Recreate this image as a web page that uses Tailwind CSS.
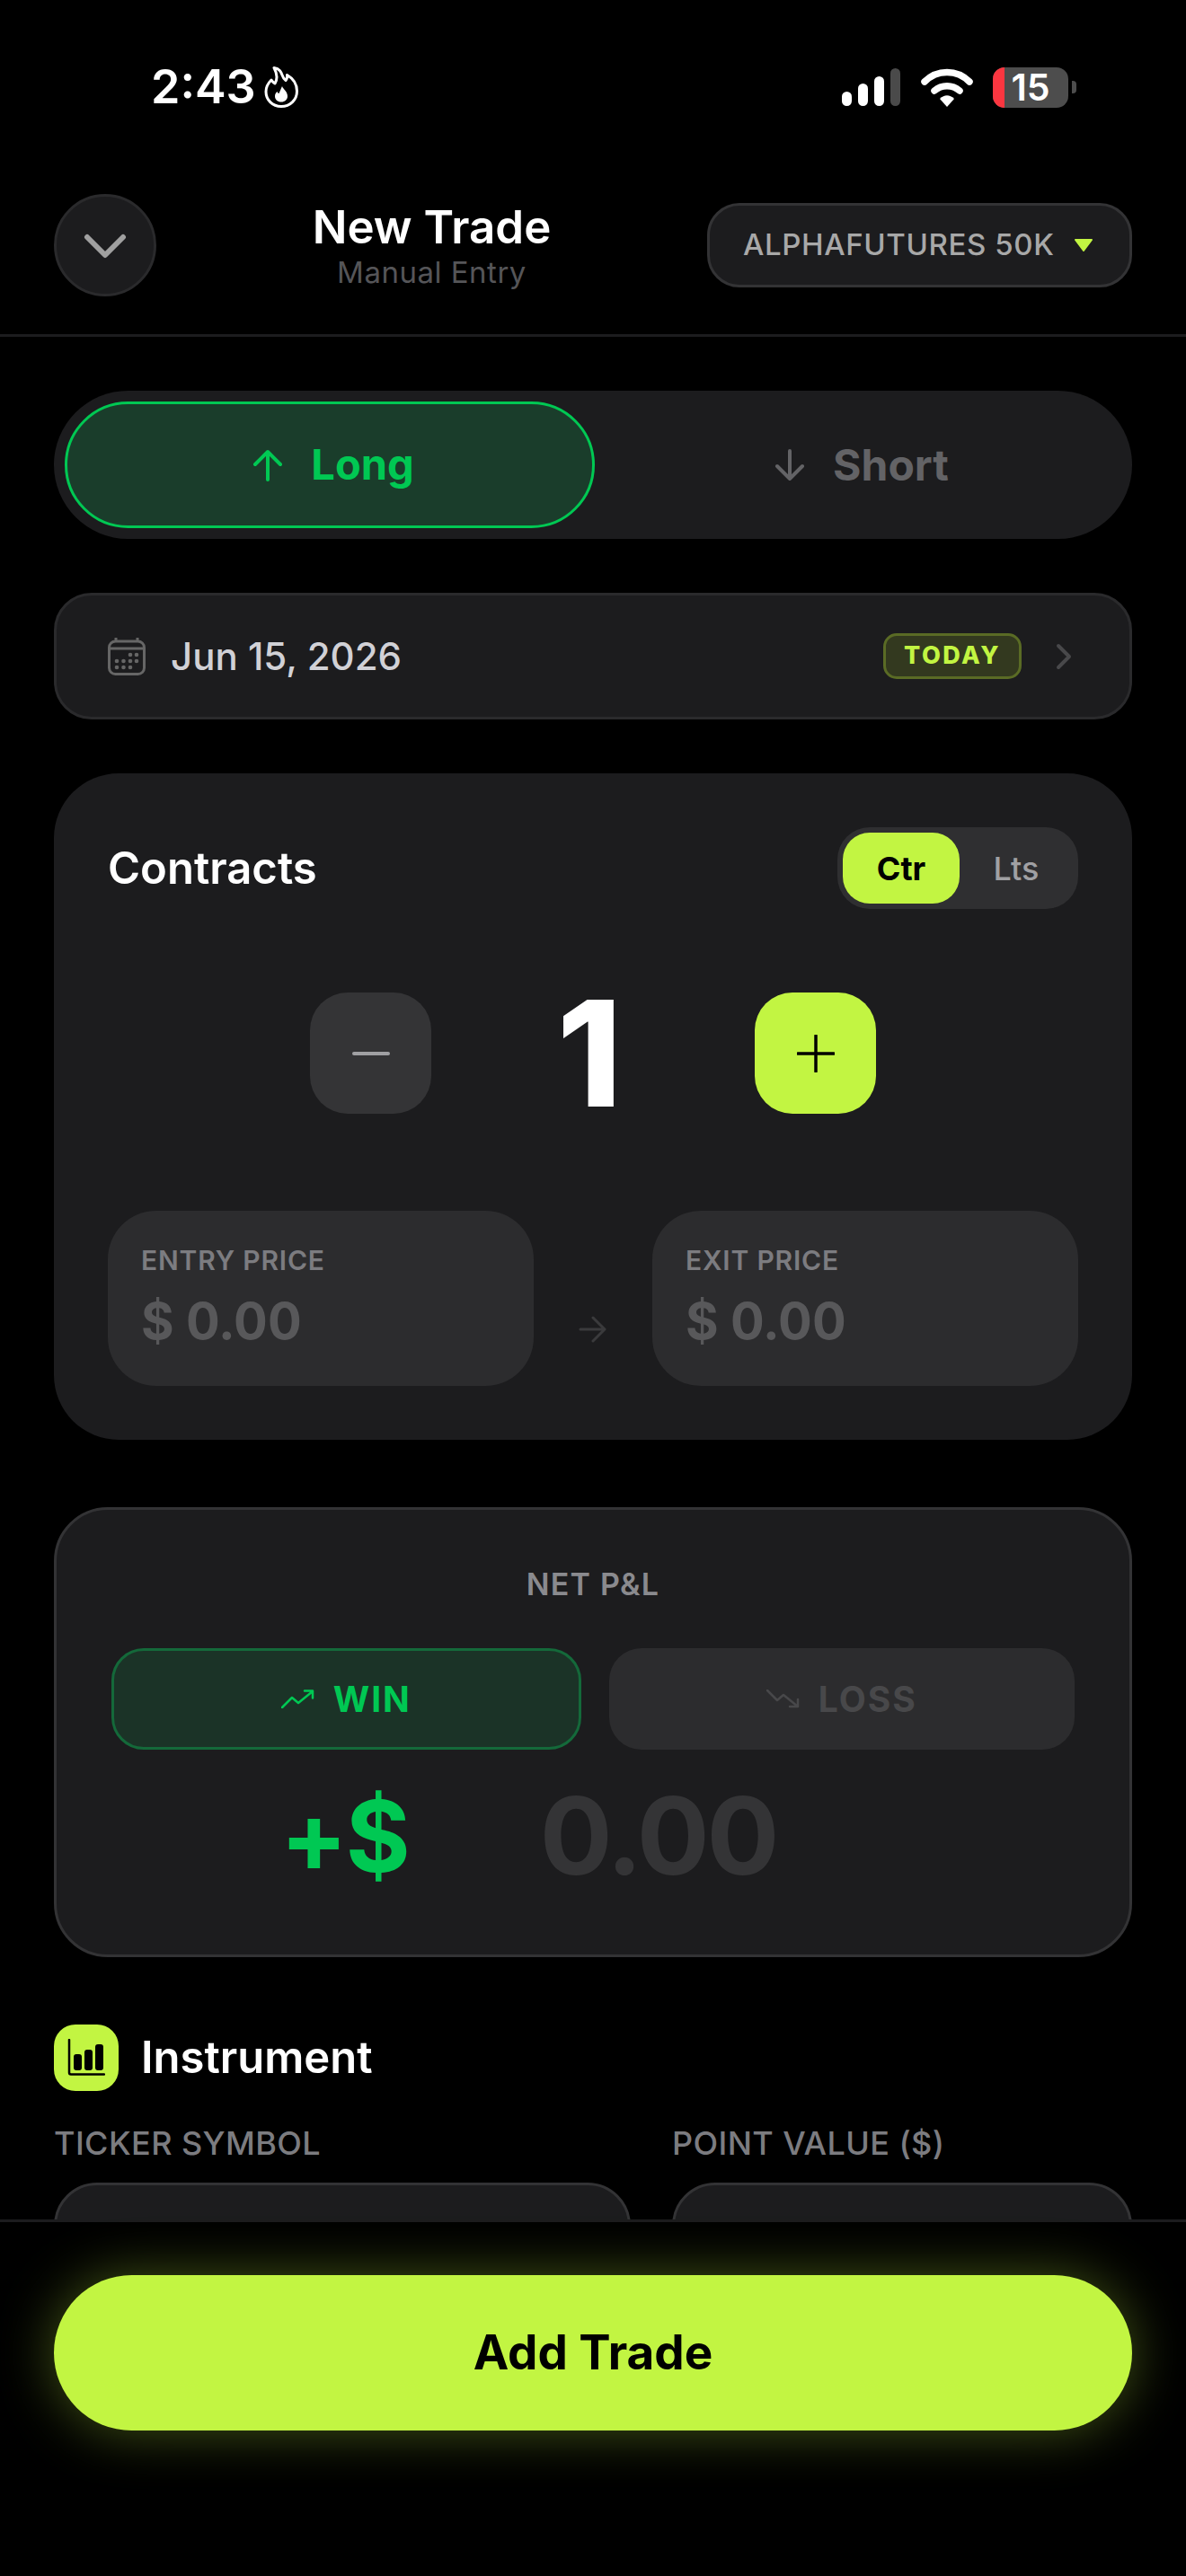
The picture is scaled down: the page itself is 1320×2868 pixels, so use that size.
<!DOCTYPE html>
<html lang="en">
<head>
  <meta charset="UTF-8">
  <meta name="viewport" content="width=device-width, initial-scale=1.0">
  <title>New Trade</title>
  <script src="https://cdn.jsdelivr.net/npm/@tailwindcss/browser@4"></script>
</head>
<body class="bg-black">
  <div class="w-[1320px] h-[2868px] flex flex-col overflow-hidden bg-black text-white font-[Inter,sans-serif]">

    <!-- Status bar -->
    <div class="h-[190px] shrink-0 flex items-start justify-between pl-[168px] pr-[122px] pt-[74px]">
      <div class="flex items-center gap-[9px] h-[46px]">
        <span class="text-[52px] leading-none font-semibold">2:43</span>
        <svg width="38" height="46" viewBox="0 0 38 46" fill="none">
          <path d="M11 1.500c11 2 7 10 13 14 1.500-2 2-4 1.500-6 7 4 11 11 11 18 0 9.500-7.500 17-17.500 17S2 37 2 28c0-6 3-10 6-13 1 1.500 2 3 4 4 3-5 2-12-1-17.500z" stroke="white" stroke-width="3" stroke-linejoin="round"/>
          <path d="M20 22c1 3 6 6 6 11 0 4-3 6.500-7 6.500s-7-2.500-7-6.500c0-2 1-4 2.500-5 .5 1 1 2 2 2 1-2 2-5 3.500-8z" fill="white"/>
        </svg>
      </div>
      <div class="flex items-center h-[46px]">
        <svg width="66" height="42" viewBox="0 0 66 42" class="mr-[22px]">
          <rect x="0" y="26" width="11" height="16" rx="5.500" fill="white"/>
          <rect x="18" y="17" width="11" height="25" rx="5.500" fill="white"/>
          <rect x="36" y="9" width="11" height="33" rx="5.500" fill="white"/>
          <rect x="54" y="0" width="11" height="42" rx="5.500" fill="#4a4a4a"/>
        </svg>
        <svg width="58" height="43" viewBox="0 0 58 43" fill="none" class="mr-[22px]">
          <path d="M4 15C18 1 40 1 54 15" stroke="white" stroke-width="7.500" stroke-linecap="round"/>
          <path d="M15 25c8-7 20-7 28 0" stroke="white" stroke-width="7.500" stroke-linecap="round"/>
          <path d="M21 34c5-5 11-5 16 0L29 43z" fill="white"/>
        </svg>
        <div class="relative w-[84px] h-[45px] rounded-[13px] bg-[#4d4d4d] flex items-center justify-center">
          <div class="absolute left-0 top-0 bottom-0 w-[13px] rounded-l-[13px] bg-[#fb3640]"></div>
          <span class="text-[41px] leading-none font-semibold">15</span>
        </div>
        <div class="w-[5px] h-[14px] ml-[4px] rounded-r-[4px] bg-[#4d4d4d]"></div>
      </div>
    </div>

    <!-- Header -->
    <div class="h-[185px] shrink-0 border-b-[3px] border-[#1c1c1e] px-[60px] pt-[26px]">
      <div class="flex items-center h-[114px]">
        <div class="w-[114px] h-[114px] rounded-full bg-[#1c1c1e] border-[3px] border-[#2a2a2c] flex items-center justify-center">
          <svg width="48" height="30" viewBox="0 0 48 30" fill="none"><path d="M4 6l20 20L44 6" stroke="#a0a0a0" stroke-width="6" stroke-linecap="round" stroke-linejoin="round"/></svg>
        </div>
        <div class="flex-1 text-center">
          <div class="text-[51px] leading-[60px] font-semibold">New Trade</div>
          <div class="text-[33px] leading-[40px] text-[#555558] tracking-[0.5px]">Manual Entry</div>
        </div>
        <div class="w-[473px] h-[94px] rounded-[36px] bg-[#1c1c1e] border-[3px] border-[#333335] flex items-center pl-[37px]">
          <span class="text-[33px] font-medium text-[#a8a8a8] tracking-[0.6px]">ALPHAFUTURES 50K</span>
          <svg width="22" height="14" viewBox="0 0 22 14" class="ml-[22px]"><path d="M2 1h18l-9 12z" fill="#c2f542" stroke="#c2f542" stroke-width="2" stroke-linejoin="round"/></svg>
        </div>
      </div>
    </div>

    <!-- Scrolling form -->
    <div class="flex-1 min-h-0 overflow-hidden px-[60px] pt-[60px]">

      <!-- Long / Short -->
      <div class="h-[165px] rounded-full bg-[#1c1c1e] p-[12px] flex">
        <div class="w-[590px] pl-[8px] rounded-full bg-[#1a3d2b] border-[3px] border-[#00c853] flex items-center justify-center gap-[31px] text-[#00c853]">
          <svg width="34" height="36" viewBox="0 0 34 36" fill="none"><path d="M17 34V3M3 17L17 3l14 14" stroke="#00c853" stroke-width="4" stroke-linecap="round" stroke-linejoin="round"/></svg>
          <span class="text-[47px] font-bold">Long</span>
        </div>
        <div class="flex-1 pl-[8px] flex items-center justify-center gap-[31px] text-[#636366]">
          <svg width="34" height="36" viewBox="0 0 34 36" fill="none"><path d="M17 2v31M3 19l14 14 14-14" stroke="#636366" stroke-width="4" stroke-linecap="round" stroke-linejoin="round"/></svg>
          <span class="text-[48px] font-bold">Short</span>
        </div>
      </div>

      <!-- Date -->
      <div class="mt-[60px] h-[141px] rounded-[42px] bg-[#1c1c1e] border-[3px] border-[#2a2a2c] flex items-center pl-[57px] pr-[64px]">
        <svg width="42" height="42" viewBox="0 0 42 42" fill="none">
          <rect x="1.500" y="4" width="39" height="36.500" rx="7" stroke="#666" stroke-width="3"/>
          <path d="M1.500 12h39M9 0v4M33 0v4" stroke="#666" stroke-width="3"/>
          <g fill="#666"><circle cx="25" cy="19" r="2.300"/><circle cx="32" cy="19" r="2.300"/><circle cx="10" cy="26" r="2.300"/><circle cx="17.500" cy="26" r="2.300"/><circle cx="25" cy="26" r="2.300"/><circle cx="32" cy="26" r="2.300"/><circle cx="10" cy="33" r="2.300"/><circle cx="17.500" cy="33" r="2.300"/><circle cx="25" cy="33" r="2.300"/></g>
        </svg>
        <span class="ml-[28px] text-[42px] font-medium text-[#d1d1d6]">Jun 15, 2026</span>
        <div class="ml-auto w-[154px] h-[51px] rounded-[15px] bg-[#33391f] border-[3px] border-[#5a6b25] flex items-center justify-center text-[27px] font-extrabold tracking-[2.500px] text-[#c2f542]">TODAY</div>
        <svg width="18" height="30" viewBox="0 0 18 30" fill="none" class="ml-[38px]"><path d="M3 3l12 12L3 27" stroke="#48484a" stroke-width="4" stroke-linecap="round" stroke-linejoin="round"/></svg>
      </div>

      <!-- Contracts card -->
      <div class="mt-[60px] h-[742px] rounded-[72px] bg-[#1c1c1e] px-[60px] pt-[60px]">
        <div class="flex items-center justify-between h-[91px]">
          <span class="text-[49px] font-semibold">Contracts</span>
          <div class="w-[268px] h-[91px] rounded-[36px] bg-[#2f2f31] p-[6px] flex items-center">
            <div class="w-[130px] h-[79px] rounded-[30px] bg-[#c2f542] flex items-center justify-center text-[36px] font-bold text-black">Ctr</div>
            <div class="flex-1 text-center text-[36px] font-medium text-[#a0a0a3]">Lts</div>
          </div>
        </div>
        <div class="mt-[93px] flex items-center h-[135px] pl-[225px]">
          <div class="w-[135px] h-[135px] rounded-[42px] bg-[#343436] flex items-center justify-center">
            <div class="w-[42px] h-[4px] rounded-full bg-[#a0a0a3]"></div>
          </div>
          <div class="w-[360px] pr-[8px] text-center text-[164px] leading-none font-extrabold">1</div>
          <div class="w-[135px] h-[135px] rounded-[42px] bg-[#c2f542] flex items-center justify-center">
            <svg width="42" height="42" viewBox="0 0 42 42" fill="none"><path d="M21 1v40M1 21h40" stroke="black" stroke-width="3.500" stroke-linecap="round"/></svg>
          </div>
        </div>
        <div class="mt-[108px] flex h-[195px]">
          <div class="w-[474px] rounded-[54px] bg-[#2c2c2e] pl-[37px] pt-[37px]">
            <div class="text-[30px] leading-[36px] font-semibold tracking-[0.8px] text-[#7c7c80]">ENTRY PRICE</div>
            <div class="mt-[14px] text-[56px] leading-[72px] font-bold text-[#58585a]">$ 0.00</div>
          </div>
          <div class="w-[132px] flex items-center justify-center pt-[68px]">
            <svg width="32" height="30" viewBox="0 0 32 30" fill="none"><path d="M2 15h27M16 2l13 13-13 13" stroke="#3a3a3c" stroke-width="3" stroke-linecap="round" stroke-linejoin="round"/></svg>
          </div>
          <div class="w-[474px] rounded-[54px] bg-[#2c2c2e] pl-[37px] pt-[37px]">
            <div class="text-[30px] leading-[36px] font-semibold tracking-[0.8px] text-[#7c7c80]">EXIT PRICE</div>
            <div class="mt-[14px] text-[56px] leading-[72px] font-bold text-[#58585a]">$ 0.00</div>
          </div>
        </div>
      </div>

      <!-- Net P&L card -->
      <div class="mt-[75px] h-[501px] rounded-[60px] bg-[#1c1c1e] border-[3px] border-[#333335] px-[61px] pt-[63px]">
        <div class="text-center text-[34px] leading-[40px] font-semibold tracking-[1.200px] text-[#8a8a8e]">NET P&amp;L</div>
        <div class="mt-[51px] flex gap-[31px] h-[113px]">
          <div class="w-[523px] rounded-[36px] bg-[#1b3327] border-[3px] border-[#14693a] flex items-center justify-center gap-[21px]">
            <svg width="37" height="21" viewBox="0 0 37 21" fill="none"><path d="M1 20l11-11 7 6L35 2M26 1.500h9v8" stroke="#00c853" stroke-width="2.500" stroke-linecap="round" stroke-linejoin="round"/></svg>
            <span class="text-[39px] leading-none font-bold tracking-[2px] text-[#00c853]">WIN</span>
          </div>
          <div class="w-[519px] rounded-[36px] bg-[#2c2c2e] flex items-center justify-center gap-[21px]">
            <svg width="37" height="21" viewBox="0 0 37 21" fill="none"><path d="M1 1l11 11 7-6 16 13M35 11v8h-9" stroke="#48484a" stroke-width="2.500" stroke-linecap="round" stroke-linejoin="round"/></svg>
            <span class="text-[39px] leading-none font-bold tracking-[2px] text-[#48484a]">LOSS</span>
          </div>
        </div>
        <div class="mt-[36px] flex items-center h-[120px] pl-[188px]">
          <span class="text-[110px] leading-none font-bold tracking-[-2px] text-[#00c853]">+$</span>
          <span class="ml-[146px] text-[120px] leading-none font-bold tracking-[-3px] text-[#343436]">0.00</span>
        </div>
      </div>

      <!-- Instrument -->
      <div class="mt-[75px] flex items-center gap-[25px] h-[74px]">
        <div class="w-[72px] h-[74px] rounded-[24px] bg-[#c2f542] flex items-center justify-center">
          <svg width="42" height="42" viewBox="0 0 42 42" fill="none">
            <path d="M2 1v36.500a2 2 0 0 0 2 2h37" stroke="black" stroke-width="2.500" stroke-linecap="round"/>
            <rect x="7" y="17" width="9" height="18" rx="3" fill="black"/>
            <rect x="19" y="12" width="9" height="23" rx="3" fill="black"/>
            <rect x="31" y="6" width="9" height="29" rx="3" fill="black"/>
          </svg>
        </div>
        <span class="text-[49px] font-semibold">Instrument</span>
      </div>
      <div class="mt-[36px] flex gap-[46px]">
        <div class="w-[642px]">
          <div class="text-[36px] leading-[44px] font-medium tracking-[0.4px] text-[#7c7c80]">TICKER SYMBOL</div>
          <div class="mt-[22px] h-[120px] rounded-[48px] bg-[#1c1c1e] border-[3px] border-[#333335]"></div>
        </div>
        <div class="w-[512px]">
          <div class="text-[36px] leading-[44px] font-medium tracking-[0.4px] text-[#7c7c80]">POINT VALUE ($)</div>
          <div class="mt-[22px] h-[120px] rounded-[48px] bg-[#1c1c1e] border-[3px] border-[#333335]"></div>
        </div>
      </div>
    </div>

    <!-- Footer -->
    <div class="h-[397px] shrink-0 bg-black border-t-[3px] border-[#1c1c1e] px-[60px] pt-[59px]">
      <div class="h-[173px] rounded-full bg-[#c2f542] shadow-[0_0_60px_rgba(194,245,66,0.35)] flex items-center justify-center text-[53px] font-bold text-black">Add Trade</div>
    </div>
  </div>
</body>
</html>
